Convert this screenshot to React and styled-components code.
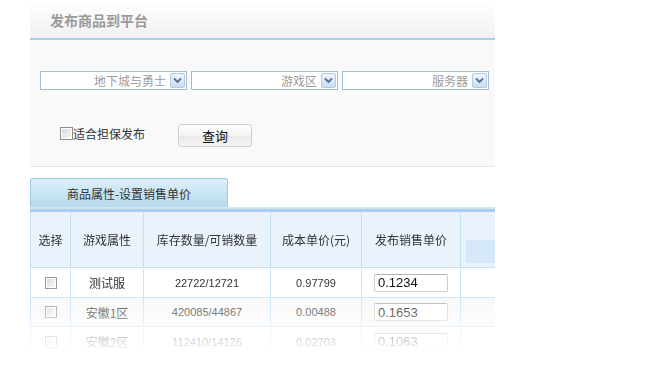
import styled, { createGlobalStyle } from "styled-components";

const Global = createGlobalStyle`
  body {
    margin: 0;
    background: #fff;
    font-family: "Liberation Sans", "Noto Sans CJK SC", sans-serif;
  }
`;

const Panel = styled.div`
  width: 465px;
  margin-left: 30px;
  overflow: hidden;
`;

const Header = styled.div`
  height: 40px;
  box-sizing: border-box;
  padding: 2px 0 0 20px;
  display: flex;
  align-items: center;
  background: linear-gradient(#ffffff, #f1f1f1);
  border-bottom: 2px solid #a9d1e6;
`;

const Title = styled.h1`
  margin: 0;
  font-size: 14px;
  font-weight: bold;
  color: #9a9a9a;
  font-family: "Noto Sans CJK SC", sans-serif;
`;

const Filters = styled.div`
  height: 127px;
  box-sizing: border-box;
  padding: 31px 0 0 10px;
  background: #f9f9f9;
  border-bottom: 1px solid #e6e6e6;
`;

const SelectRow = styled.div`
  display: flex;
  gap: 4px;
`;

const Select = styled.div`
  width: 147px;
  height: 19px;
  box-sizing: border-box;
  border: 1px solid #a7bbd1;
  background: #fff;
  display: flex;
  align-items: center;
  justify-content: flex-end;
  gap: 4px;
  padding-right: 1px;
  font-size: 12px;
  color: #9c9c9c;
  font-family: "Noto Sans CJK SC", sans-serif;
`;

const Arrow = styled.span`
  width: 15px;
  height: 15px;
  box-sizing: border-box;
  border: 1px solid #b4c8df;
  border-radius: 2px;
  background: linear-gradient(#eef5fd, #c9dcf3);
  display: flex;
  align-items: center;
  justify-content: center;
`;

const OptionRow = styled.div`
  display: flex;
  align-items: center;
  margin-top: 34px;
  padding-left: 20px;
`;

const Check = styled.span`
  width: ${(p) => p.$size}px;
  height: ${(p) => p.$size}px;
  box-sizing: border-box;
  border: 1px solid ${(p) => p.$border};
  background: linear-gradient(135deg, #d8d8d8, #fafafa);
  box-shadow: inset 0 0 0 1px #fff;
  display: inline-block;
`;

const Label = styled.label`
  display: flex;
  align-items: center;
  font-size: 12px;
  color: #333;
  font-family: "Noto Sans CJK SC", sans-serif;
  margin-top: -5px;
`;

const Button = styled.button`
  margin-left: 33px;
  width: 74px;
  height: 23px;
  border: 1px solid #cfcfcf;
  border-radius: 3px;
  background: linear-gradient(#ffffff 0%, #f4f4f4 50%, #e9e9e9 51%, #f3f3f3 100%);
  font-size: 13px;
  color: #111;
  font-family: "Noto Sans CJK SC", sans-serif;
  padding: 0;
`;

const Tab = styled.div`
  margin-top: 11px;
  width: 198px;
  height: 29px;
  box-sizing: border-box;
  border: 1px solid #9fc7e6;
  border-bottom: none;
  border-radius: 3px 3px 0 0;
  background: linear-gradient(#ddf0fa, #b6daee);
  display: flex;
  align-items: center;
  justify-content: center;
  font-size: 12px;
  color: #333;
  font-family: "Noto Sans CJK SC", sans-serif;
`;

const Band = styled.div`
  height: 5px;
  background: linear-gradient(#d3e6f6 0 40%, #a9cdee 40% 100%);
`;

const Table = styled.div`
  display: grid;
  grid-template-columns: 40px 73px 127px 91px 99px 1fr;
  border-left: 1px solid #c6e0f8;
  box-sizing: border-box;
  height: 145px;
  -webkit-mask-image: linear-gradient(#000 0, #000 78px, transparent 142px);
  mask-image: linear-gradient(#000 0, #000 78px, transparent 142px);
`;

const Cell = styled.div`
  height: ${(p) => p.$h}px;
  box-sizing: border-box;
  border-right: ${(p) => (p.$last ? "none" : "1px solid #c6e0f8")};
  border-bottom: 1px solid #c6e0f8;
  background: ${(p) => p.$bg};
  display: flex;
  align-items: center;
  justify-content: ${(p) => (p.$left ? "flex-start" : "center")};
  padding-left: ${(p) => (p.$left ? "12px" : "0")};
  font-size: ${(p) => (p.$head ? "12px" : "11px")};
  color: #333;
  font-family: ${(p) =>
    p.$cjk
      ? '"Noto Sans CJK SC", sans-serif'
      : '"Liberation Sans", "Noto Sans CJK SC", sans-serif'};
`;

const HeadBox = styled.div`
  align-self: flex-end;
  margin: 0 0 4px 5px;
  width: 100%;
  height: 23px;
  background: #d6e9fb;
`;

const PriceInput = styled.input`
  width: 74px;
  height: 18px;
  box-sizing: border-box;
  border: 1px solid #cfcfcf;
  border-top-color: #b3b3b3;
  border-radius: 2px;
  padding: 0 3px;
  font-size: 13px;
  color: #111;
  font-family: "Liberation Sans", sans-serif;
  background: #fff;
`;

const Chevron = () => (
  <svg width="9" height="7" viewBox="0 0 9 7">
    <path d="M1 1.5 L4.5 5 L8 1.5" fill="none" stroke="#5a6f8c" strokeWidth="1.8" />
  </svg>
);

const selects = ["地下城与勇士", "游戏区", "服务器"];
const heads = ["选择", "游戏属性", "库存数量/可销数量", "成本单价(元)", "发布销售单价"];
const rows = [
  { name: "测试服", stock: "22722/12721", cost: "0.97799", price: "0.1234", bg: "#fff" },
  { name: "安徽1区", stock: "420085/44867", cost: "0.00488", price: "0.1653", bg: "#f8f8f8" },
  { name: "安徽2区", stock: "112410/14126", cost: "0.02703", price: "0.1063", bg: "#fff" },
];

export default function App() {
  return (
    <>
      <Global />
      <Panel>
        <Header>
          <Title>发布商品到平台</Title>
        </Header>
        <Filters>
          <SelectRow>
            {selects.map((s) => (
              <Select key={s}>
                {s}
                <Arrow>
                  <Chevron />
                </Arrow>
              </Select>
            ))}
          </SelectRow>
          <OptionRow>
            <Label>
              <Check $size={13} $border="#8d8d8d" />
              适合担保发布
            </Label>
            <Button>查询</Button>
          </OptionRow>
        </Filters>
        <Tab>商品属性-设置销售单价</Tab>
        <Band />
        <Table>
          {heads.map((h) => (
            <Cell key={h} $h={56} $head $cjk $bg="#eaf3fc">
              {h}
            </Cell>
          ))}
          <Cell $h={56} $bg="#eaf3fc" $last>
            <HeadBox />
          </Cell>
          {rows.map((r) => (
            <Row key={r.name} r={r} />
          ))}
        </Table>
      </Panel>
    </>
  );
}

function Row({ r }) {
  return (
    <>
      <Cell $h={29} $bg={r.bg}>
        <Check $size={12} $border="#9a9a9a" />
      </Cell>
      <Cell $h={29} $bg={r.bg} $head $cjk>
        {r.name}
      </Cell>
      <Cell $h={29} $bg={r.bg}>
        {r.stock}
      </Cell>
      <Cell $h={29} $bg={r.bg}>
        {r.cost}
      </Cell>
      <Cell $h={29} $bg={r.bg} $left>
        <PriceInput defaultValue={r.price} />
      </Cell>
      <Cell $h={29} $bg={r.bg} $last />
    </>
  );
}
